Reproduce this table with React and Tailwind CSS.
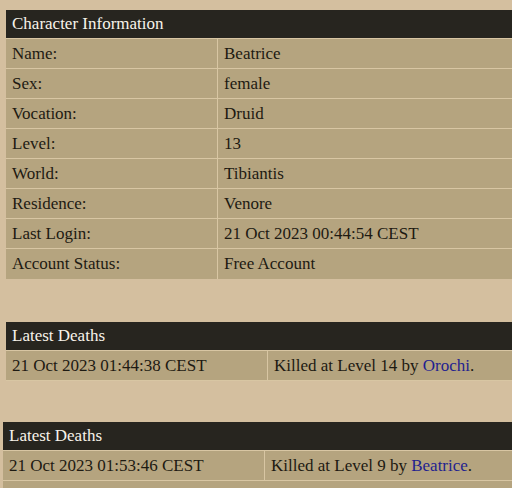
const info = [
    ["Name:", "Beatrice"],
    ["Sex:", "female"],
    ["Vocation:", "Druid"],
    ["Level:", "13"],
    ["World:", "Tibiantis"],
    ["Residence:", "Venore"],
    ["Last Login:", "21 Oct 2023 00:44:54 CEST"],
    ["Account Status:", "Free Account"],
];

const Header = ({ title }) => (
    <div className="bg-[#27251f] text-[#f7f3ea] h-[29px] flex items-center px-[6px] border-b border-[#d8c6a3]">
        {title}
    </div>
);

const Death = ({ date, level, killer, first }) => (
    <div className="flex h-[30px] border-b border-[#d8c6a3]">
        <div className={`bg-[#b5a47f] flex items-center px-[6px] border-r border-[#d8c6a3] ${first}`}>{date}</div>
        <div className="bg-[#b5a47f] flex items-center px-[6px] flex-1">
            Killed at Level {level} by&nbsp;<span className="text-[#1f1f8f]">{killer}</span>.
        </div>
    </div>
);

const App = () => {
    return (
        <div
            className="w-[512px] h-[488px] overflow-hidden bg-[#d4bf9f] text-[#1d1a12] text-[17px]"
            style={{ fontFamily: '"Liberation Serif", serif' }}
        >
            <div className="w-[540px] ml-[6px] mt-[10px]">
                <Header title="Character Information" />
                {info.map(([k, v]) => (
                    <div key={k} className="flex h-[30px] border-b border-[#d8c6a3] last:border-b-0">
                        <div className="w-[212px] bg-[#b5a47f] flex items-center px-[6px] border-r border-[#d8c6a3]">{k}</div>
                        <div className="flex-1 bg-[#b5a47f] flex items-center px-[6px]">{v}</div>
                    </div>
                ))}
            </div>

            <div className="w-[540px] ml-[6px] mt-[43px]">
                <Header title="Latest Deaths" />
                <Death date="21 Oct 2023 01:44:38 CEST" level="14" killer="Orochi" first="w-[262px]" />
            </div>

            <div className="w-[540px] ml-[3px] mt-[41px]">
                <Header title="Latest Deaths" />
                <Death date="21 Oct 2023 01:53:46 CEST" level="9" killer="Beatrice" first="w-[262px]" />
                <div className="h-[30px] bg-[#b5a47f]"></div>
            </div>
        </div>
    );
};

export default App;
